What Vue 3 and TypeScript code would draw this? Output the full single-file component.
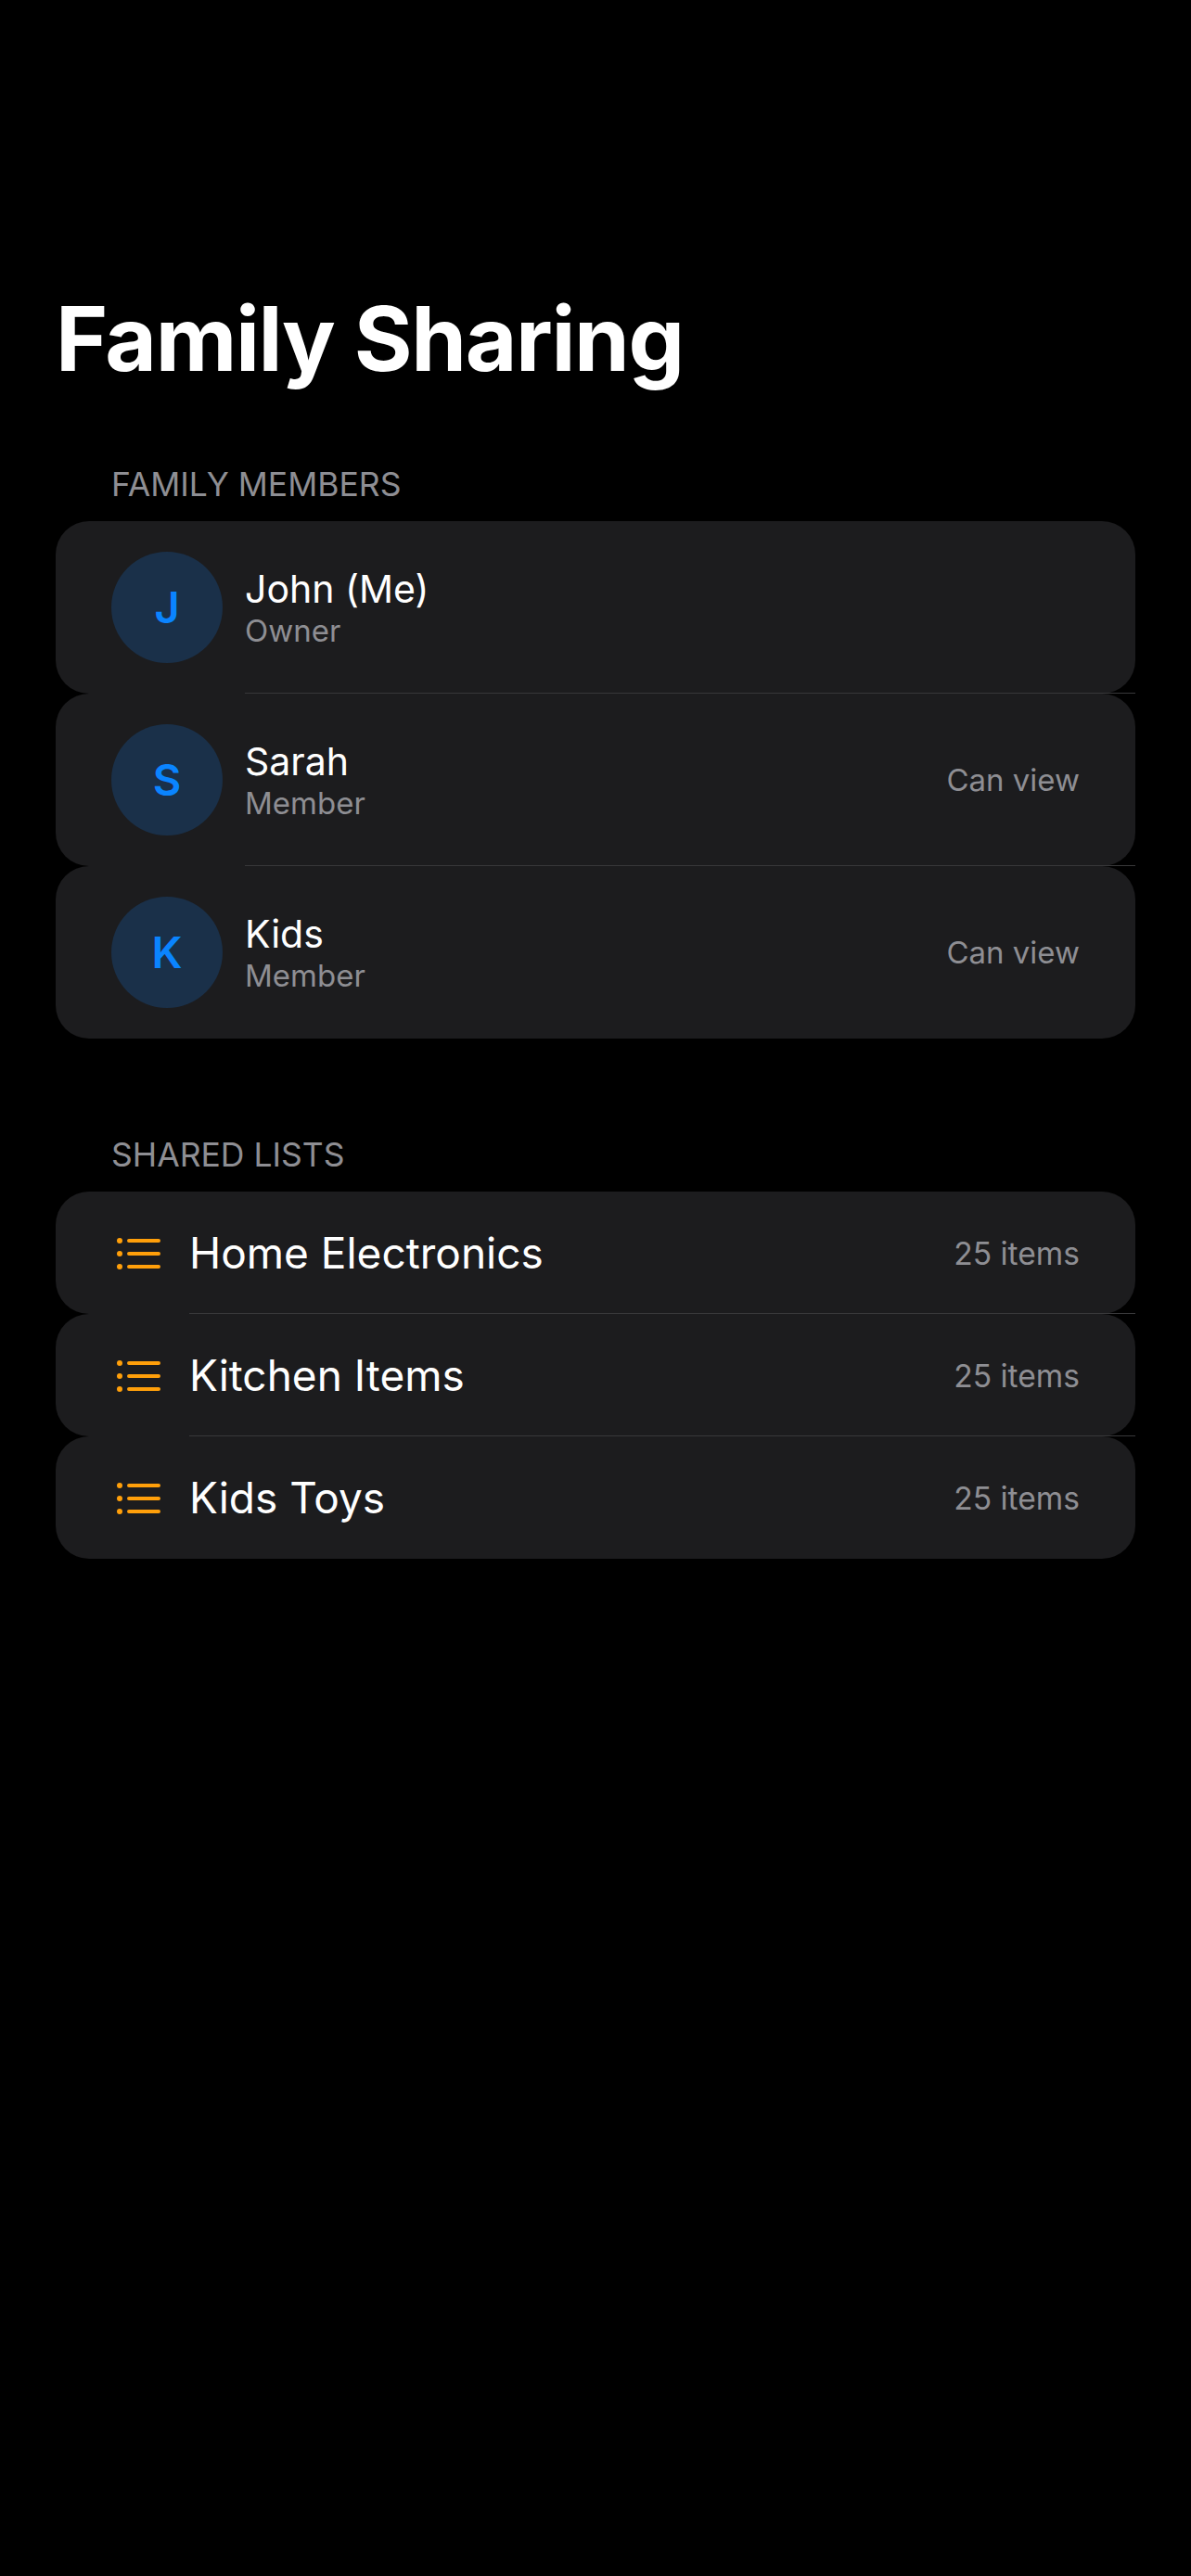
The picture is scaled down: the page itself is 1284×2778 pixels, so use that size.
<template>
  <div class="screen">
    <h1 class="title">Family Sharing</h1>

    <section class="members">
      <h2 class="section-label">FAMILY MEMBERS</h2>
      <div v-for="m in members" :key="m.name" class="row member-row">
        <div class="avatar">{{ m.name[0] }}</div>
        <div class="member-info">
          <div class="member-name">{{ m.name }}</div>
          <div class="member-role">{{ m.role }}</div>
        </div>
        <div v-if="m.access" class="side">{{ m.access }}</div>
      </div>
    </section>

    <section class="lists">
      <h2 class="section-label">SHARED LISTS</h2>
      <div v-for="l in lists" :key="l" class="row list-row">
        <svg class="list-icon" width="48" height="36" viewBox="0 0 48 36" fill="none">
          <circle cx="3" cy="4" r="3" fill="#ff9f0a" />
          <circle cx="3" cy="18" r="3" fill="#ff9f0a" />
          <circle cx="3" cy="32" r="3" fill="#ff9f0a" />
          <path d="M13 4h32M13 18h32M13 32h32" stroke="#ff9f0a" stroke-width="4" stroke-linecap="round" />
        </svg>
        <div class="list-name">{{ l }}</div>
        <div class="side">25 items</div>
      </div>
    </section>
  </div>
</template>

<script setup lang="ts">
const members = [
  { name: 'John (Me)', role: 'Owner', access: '' },
  { name: 'Sarah', role: 'Member', access: 'Can view' },
  { name: 'Kids', role: 'Member', access: 'Can view' }
]

const lists = ['Home Electronics', 'Kitchen Items', 'Kids Toys']
</script>

<style>
html,
body {
  background: #000;
}
</style>

<style scoped>
.screen {
  min-height: 2778px;
  box-sizing: border-box;
  padding: 305px 60px 0;
  background: #000;
  color: #fff;
  font-family: Inter, "Liberation Sans", sans-serif;
  text-rendering: optimizeLegibility;
}

.title {
  margin: 0 0 76px;
  font-size: 96px;
  line-height: 120px;
  font-weight: 700;
  letter-spacing: -1.4px;
}

.section-label {
  margin: 0 0 17px 60px;
  font-size: 35.5px;
  line-height: 44px;
  font-weight: 400;
  color: #8e8e93;
}

.members {
  margin-bottom: 104px;
}

.row {
  position: relative;
  display: flex;
  align-items: center;
  background: #1c1c1e;
  border-radius: 36px;
  padding: 0 60px;
}

.row::after {
  content: "";
  position: absolute;
  right: 0;
  bottom: 0;
  height: 1px;
  background: #38383a;
}

.row:last-child::after {
  display: none;
}

.member-row {
  height: 186px;
}

.member-row::after {
  left: 204px;
}

.list-row {
  height: 132px;
}

.list-row::after {
  left: 144px;
}

.avatar {
  flex: none;
  width: 120px;
  height: 120px;
  box-sizing: border-box;
  padding-bottom: 2px;
  margin-right: 24px;
  border-radius: 50%;
  background: #1a3049;
  color: #0a84ff;
  display: flex;
  align-items: center;
  justify-content: center;
  font-size: 47px;
  font-weight: 600;
}

.member-info {
  flex: 1;
  padding-top: 2px;
}

.member-name {
  font-size: 41px;
  line-height: 48px;
}

.member-role {
  font-size: 33px;
  line-height: 42px;
  color: #8e8e93;
}

.side {
  font-size: 33px;
  color: #8e8e93;
}

.list-row .side {
  font-size: 33.6px;
}

.list-icon {
  flex: none;
  margin-top: 2px;
  margin-left: 6px;
  margin-right: 30px;
}

.list-name {
  flex: 1;
  font-size: 46px;
}
</style>
